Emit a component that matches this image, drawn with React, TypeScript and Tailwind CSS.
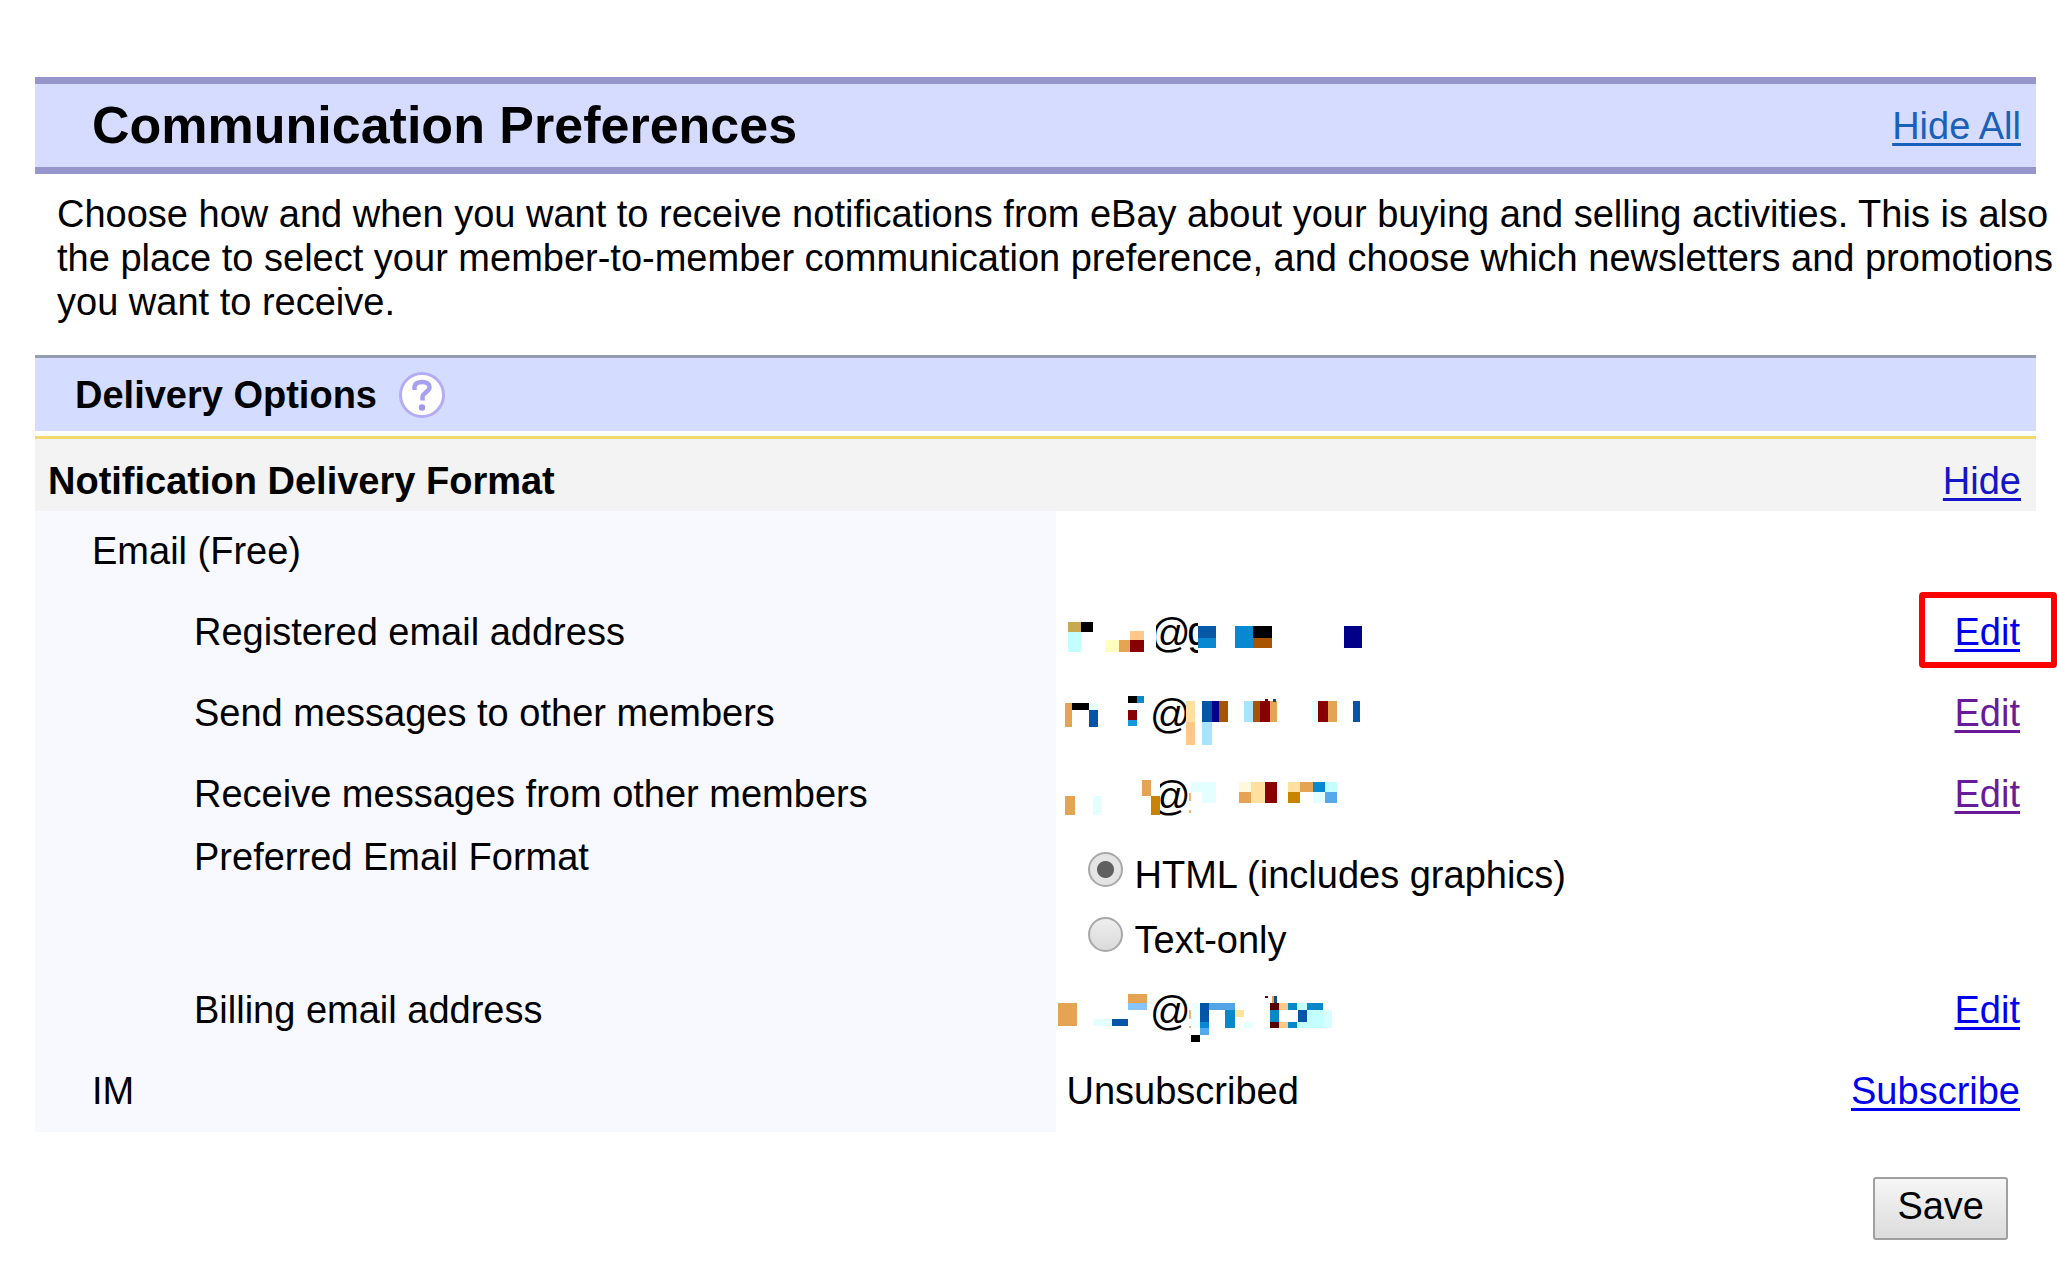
import React from "react";

type Tile = [x: number, y: number, w: number, h: number, fill: string];

interface MaskedAddressProps {
  top: number;
  height: number;
  className: string;
  at: [number, number];
  tail?: [number, number];
  tiles: Tile[];
}

/* An address hidden behind a mosaic; only the "@" stays readable. */
function MaskedAddress({ top, height, className, at, tail, tiles }: MaskedAddressProps) {
  return (
    <svg
      viewBox={`48 ${top} 1002 ${height}`}
      className={`overflow-visible ${className}`}
      role="img"
      aria-label="Masked email address"
      fontFamily="Liberation Sans, Arial, sans-serif"
      fontSize="120"
      shapeRendering="crispEdges"
    >
      <text x={at[0]} y={at[1]}>@</text>
      {tail && <text x={tail[0]} y={tail[1]}>g</text>}
      {tiles.map(([x, y, w, h, fill], i) => (
        <rect key={i} x={x} y={y} width={w} height={h} fill={fill} />
      ))}
    </svg>
  );
}

const registered: Tile[] = [
  [320, 40, 27, 120, "#fff"],
  [473, 40, 60, 130, "#fff"],
  [440, 158, 40, 30, "#fff"],
  [83, 66, 41, 30, "#c8a850"],
  [124, 66, 36, 30, "#000"],
  [83, 96, 41, 61, "#c4ffff"],
  [194, 121, 42, 36, "#ffffc0"],
  [236, 121, 34, 36, "#e4a454"],
  [270, 94, 43, 28, "#ffc888"],
  [270, 121, 43, 36, "#880000"],
  [474, 79, 54, 36, "#0858a8"],
  [474, 115, 54, 28, "#0888d0"],
  [584, 79, 56, 64, "#0888d0"],
  [640, 79, 55, 36, "#000"],
  [640, 115, 55, 28, "#a85400"],
  [912, 79, 55, 64, "#000088"],
];

const sendTo: Tile[] = [
  [76, 70, 21, 70, "#e4a454"],
  [97, 70, 49, 21, "#000"],
  [146, 70, 28, 21, "#e8ffff"],
  [146, 91, 28, 49, "#0454a8"],
  [264, 49, 28, 21, "#000"],
  [292, 49, 20, 21, "#0888d0"],
  [264, 91, 28, 28, "#880000"],
  [264, 119, 28, 20, "#1898dc"],
  [438, 63, 28, 63, "#ffe0a0"],
  [438, 126, 28, 70, "#ffc888"],
  [487, 63, 28, 63, "#0454a8"],
  [515, 63, 21, 63, "#000088"],
  [536, 63, 27, 63, "#a85400"],
  [487, 126, 28, 70, "#a8e4ff"],
  [612, 63, 28, 63, "#a8e4ff"],
  [640, 63, 20, 63, "#a85400"],
  [660, 63, 29, 63, "#880000"],
  [689, 63, 21, 63, "#e4a454"],
  [675, 57, 9, 8, "#700018"],
  [700, 57, 9, 8, "#104880"],
  [815, 63, 19, 63, "#e8ffff"],
  [834, 63, 29, 63, "#880000"],
  [863, 63, 27, 63, "#e4a454"],
  [939, 63, 21, 63, "#0454a8"],
];

const receiveFrom: Tile[] = [
  [320, 50, 40, 120, "#fff"],
  [76, 109, 28, 56, "#e4a454"],
  [159, 109, 28, 56, "#e4ffff"],
  [306, 60, 27, 48, "#e4a454"],
  [333, 108, 27, 57, "#c88400"],
  [446, 98, 6, 26, "#f0b868"],
  [446, 151, 6, 8, "#f0b868"],
  [452, 66, 76, 29, "#e4ffff"],
  [487, 95, 41, 35, "#e4ffff"],
  [598, 66, 35, 29, "#fff8dc"],
  [598, 95, 35, 35, "#e4a454"],
  [633, 66, 41, 64, "#ffe0a0"],
  [674, 66, 36, 64, "#880000"],
  [744, 66, 35, 29, "#ffe0a0"],
  [744, 95, 35, 35, "#c88400"],
  [779, 66, 41, 29, "#e4a454"],
  [820, 66, 35, 29, "#0888d0"],
  [820, 95, 35, 35, "#e4ffff"],
  [855, 66, 35, 29, "#c4ffff"],
  [855, 95, 35, 35, "#54a8ec"],
];

const billing: Tile[] = [
  [55, 69, 56, 69, "#e4a454"],
  [159, 118, 56, 20, "#e4ffff"],
  [215, 118, 49, 20, "#0454a8"],
  [264, 41, 56, 28, "#e4a454"],
  [264, 69, 56, 21, "#88c4ff"],
  [446, 90, 6, 26, "#f0b868"],
  [446, 138, 6, 7, "#f0b868"],
  [453, 69, 27, 76, "#f0ffff"],
  [480, 69, 28, 56, "#0454a8"],
  [480, 125, 28, 20, "#0888d0"],
  [480, 145, 28, 21, "#54a8ec"],
  [452, 166, 28, 21, "#000"],
  [508, 69, 76, 21, "#54a4e8"],
  [556, 90, 28, 55, "#0888c8"],
  [584, 90, 28, 20, "#ffe4a0"],
  [612, 125, 27, 20, "#e8ffff"],
  [674, 48, 10, 6, "#700018"],
  [696, 48, 6, 20, "#e4a454"],
  [702, 48, 8, 20, "#104880"],
  [689, 69, 27, 21, "#580000"],
  [689, 90, 27, 35, "#0888c8"],
  [689, 125, 27, 20, "#580000"],
  [716, 69, 28, 21, "#ffc888"],
  [716, 125, 28, 20, "#ffc888"],
  [744, 69, 28, 21, "#0888c8"],
  [744, 125, 28, 20, "#0888c8"],
  [772, 69, 29, 21, "#c4ffff"],
  [773, 90, 27, 35, "#0454a8"],
  [772, 125, 104, 20, "#c4ffff"],
  [801, 69, 48, 21, "#0888c8"],
  [801, 90, 48, 35, "#c4ffff"],
  [849, 90, 27, 55, "#d8ffff"],
];

const linkStyle = "underline decoration-[3px] underline-offset-[4px]";

function ActionLink({ children, visited = false }: { children: string; visited?: boolean }) {
  return (
    <a href="#" className={`${linkStyle} ${visited ? "text-[#6a1b9a]" : "text-[#0000ee]"}`}>
      {children}
    </a>
  );
}

interface PrefRowProps {
  label: string;
  nested?: boolean;
  height: string;
  value?: React.ReactNode;
  action?: React.ReactNode;
}

function PrefRow({ label, nested = false, height, value, action }: PrefRowProps) {
  return (
    <tr className={height}>
      <th
        scope="row"
        className={`bg-[#f8f8ff] pt-[18px] text-left align-top font-normal ${nested ? "pl-[159px]" : "pl-[57px]"}`}
      >
        {label}
      </th>
      <td className="align-top">{value}</td>
      <td className="relative pt-[18px] pr-4 text-right align-top">{action}</td>
    </tr>
  );
}

const radioStyle =
  "size-[35px] shrink-0 appearance-none rounded-full border-2 border-[#a8a8a8] bg-linear-to-b from-[#eeeeee] to-[#dadada] checked:bg-[radial-gradient(circle,#606060_0_8px,#e4e4e4_9px)]";

function HelpIcon() {
  return (
    <svg viewBox="0 0 46 46" className="size-[46px]" fill="none" aria-hidden="true">
      <circle cx="23" cy="23" r="21.5" fill="#fff" stroke="#b4acf4" strokeWidth="3" />
      <path
        d="M15.5 18v-3.5q1-4.5 7.5-4.5q7.5 0 7.5 5.5c0 4-7 5.5-7 9.5v3.5"
        stroke="#a8a0f0"
        strokeWidth="4.5"
      />
      <circle cx="23" cy="35.500" r="3.200" fill="#a098f0" />
    </svg>
  );
}

export default function App() {
  return (
    <main className="overflow-x-clip bg-white pt-[77px] pr-[21px] pb-[30px] pl-[35px] font-['Liberation_Sans',Arial,sans-serif] text-[38px] leading-[44px] text-black">
      <header className="flex items-center justify-between border-y-[7px] border-[#9696cc] bg-[#d6dcff] pr-[15px] pl-[57px]">
        <h1 className="pt-[11px] pb-3 text-[52px] leading-[60px] font-bold">Communication Preferences</h1>
        <a href="#" className={`${linkStyle} text-[#1a5fb8]`}>
          Hide All
        </a>
      </header>

      <p className="-mr-5 py-[18px] pl-[22px]">
        Choose how and when you want to receive notifications from eBay about your buying and selling
        activities. This is also the place to select your member-to-member communication preference, and
        choose which newsletters and promotions you want to receive.
      </p>

      <section className="mt-[13px]">
        <div className="flex h-[76px] items-center gap-[22px] border-t-[3px] border-[#949cb0] bg-[#d4dcff] pl-10">
          <h2 className="font-bold">Delivery Options</h2>
          <button type="button" aria-label="Help with delivery options">
            <HelpIcon />
          </button>
        </div>

        <div className="mt-[5px] flex items-end justify-between border-t-[3px] border-[#f4d870] bg-[#f3f3f3] pt-5 pr-[15px] pb-2 pl-[13px]">
          <h3 className="font-bold">Notification Delivery Format</h3>
          <a href="#" className={`${linkStyle} text-[#1414c8]`}>
            Hide
          </a>
        </div>

        <table className="w-full table-fixed border-collapse">
          <colgroup>
            <col className="w-[51%]" />
            <col className="w-[30%]" />
            <col className="w-[19%]" />
          </colgroup>
          <tbody>
            <PrefRow label="Email (Free)" height="h-[81px]" />
            <PrefRow
              label="Registered email address"
              nested
              height="h-[81px]"
              value={
                <MaskedAddress
                  top={-24}
                  height={240}
                  className="h-20 w-[334px]"
                  at={[330, 142]}
                  tail={[442, 135]}
                  tiles={registered}
                />
              }
              action={
                <>
                  <ActionLink>Edit</ActionLink>
                  <span className="pointer-events-none absolute top-0 -right-[21px] h-[76px] w-[138px] rounded-[4px] border-[6px] border-[#ff0000]" />
                </>
              }
            />
            <PrefRow
              label="Send messages to other members"
              nested
              height="h-[81px]"
              value={
                <MaskedAddress top={-21} height={240} className="h-20 w-[334px]" at={[330, 145]} tiles={sendTo} />
              }
              action={<ActionLink visited>Edit</ActionLink>}
            />
            <PrefRow
              label="Receive messages from other members"
              nested
              height="h-[63px]"
              value={
                <MaskedAddress top={-18} height={186} className="h-[62px] w-[334px]" at={[330, 149]} tiles={receiveFrom} />
              }
              action={<ActionLink visited>Edit</ActionLink>}
            />
            <PrefRow
              label="Preferred Email Format"
              nested
              height="h-[153px]"
              value={
                <div
                  role="radiogroup"
                  aria-label="Preferred Email Format"
                  className="flex flex-col gap-5 pt-[35px] pl-8"
                >
                  <label className="flex items-start gap-3">
                    <input type="radio" name="format" defaultChecked className={radioStyle} />
                    <span className="pt-px">HTML (includes graphics)</span>
                  </label>
                  <label className="flex items-start gap-3">
                    <input type="radio" name="format" className={radioStyle} />
                    <span className="pt-px">Text-only</span>
                  </label>
                </div>
              }
            />
            <PrefRow
              label="Billing email address"
              nested
              height="h-[81px]"
              value={
                <MaskedAddress top={-30} height={240} className="h-20 w-[334px]" at={[330, 136]} tiles={billing} />
              }
              action={<ActionLink>Edit</ActionLink>}
            />
            <PrefRow
              label="IM"
              height="h-[81px]"
              value={<div className="pt-[18px] pl-[11px]">Unsubscribed</div>}
              action={<ActionLink>Subscribe</ActionLink>}
            />
          </tbody>
        </table>
      </section>

      <div className="flex justify-end pt-[45px] pr-7">
        <button
          type="button"
          className="rounded-[3px] border-2 border-[#a0a0a0] bg-linear-to-b from-[#f6f6f6] to-[#dcdcdc] px-[22px] pt-[5px] pb-[10px]"
        >
          Save
        </button>
      </div>
    </main>
  );
}
